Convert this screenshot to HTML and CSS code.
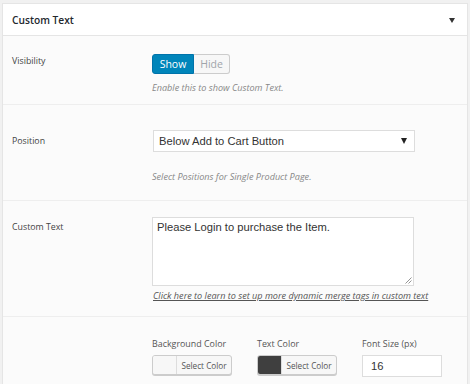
FILE: index.html
```html
<!DOCTYPE html>
<html>
<head>
<meta charset="utf-8">
<link rel="stylesheet" href="styles.css">
</head>
<body>
<div class="panel">
  <div class="header">
    <span class="title">Custom Text</span>
    <span class="caret"></span>
  </div>
  <div class="rows">
    <div class="row row-vis">
      <div class="label">Visibility</div>
      <div class="control">
        <div class="toggle"><span class="tg on">Show</span><span class="tg off">Hide</span></div>
        <p class="help">Enable this to show Custom Text.</p>
      </div>
    </div>
    <div class="row row-pos">
      <div class="label label-pos">Position</div>
      <div class="control">
        <div class="select"><span>Below Add to Cart Button</span><span class="sel-arrow"></span></div>
        <p class="help help-pos">Select Positions for Single Product Page.</p>
      </div>
    </div>
    <div class="row row-text">
      <div class="label label-text">Custom Text</div>
      <div class="control">
        <div class="textarea">Please Login to purchase the Item.<svg class="grip" width="7" height="7" viewBox="0 0 7 7"><path d="M6.5 0.5L0.5 6.5M6.5 3.5L3.5 6.5" stroke="#888" stroke-width="0.9"/></svg></div>
        <a class="link">Click here to learn to set up more dynamic merge tags in custom text</a>
      </div>
    </div>
    <div class="row row-style">
      <div class="label"></div>
      <div class="control fields">
        <div class="field">
          <div class="flabel">Background Color</div>
          <div class="colorbtn"><span class="swatch light"></span><span class="ctext">Select Color</span></div>
        </div>
        <div class="field">
          <div class="flabel">Text Color</div>
          <div class="colorbtn"><span class="swatch dark"></span><span class="ctext">Select Color</span></div>
        </div>
        <div class="field">
          <div class="flabel">Font Size (px)</div>
          <div class="num">16</div>
        </div>
      </div>
    </div>
  </div>
</div>
</body>
</html>
```
FILE: styles.css
```css
html, body {
  margin: 0;
  padding: 0;
  background: #f1f1f1;
  font-family: "Open Sans", sans-serif;
}
.panel {
  margin: 3px 2px 0 2px;
  border: 1px solid #e5e5e5;
  border-bottom: none;
  background: #fbfbfb;
}
.header {
  height: 31px;
  background: #fff;
  border-bottom: 1px solid #e5e5e5;
  display: flex;
  align-items: center;
  justify-content: space-between;
  padding: 0 12px 0 9px;
}
.title {
  font-size: 10.2px;
  font-weight: 600;
  color: #23282d;
}
.caret {
  width: 0;
  height: 0;
  border-left: 3.5px solid transparent;
  border-right: 3.5px solid transparent;
  border-top: 5px solid #333;
  margin-top: 2px;
}
.row {
  display: flex;
  border-bottom: 1px solid #eee;
}
.label {
  width: 140px;
  flex: none;
  padding-left: 9px;
  font-size: 8.8px;
  color: #444;
}
.control {
  flex: 1;
}
.row-vis { padding-top: 15px; height: 53px; }
.row-vis .label { padding-top: 4px; }
.toggle {
  display: inline-flex;
  height: 20px;
  border-radius: 3px;
}
.tg {
  display: flex;
  align-items: center;
  justify-content: center;
  font-size: 10.5px;
  height: 18px;
  box-sizing: content-box;
}
.tg.on {
  width: 40px;
  background: #0085ba;
  color: #fff;
  border: 1px solid #0073aa;
  border-radius: 3px 0 0 3px;
}
.tg.off {
  width: 35px;
  background: #f7f7f7;
  color: #a0a5aa;
  border: 1px solid #ccc;
  border-left: none;
  border-radius: 0 3px 3px 0;
}
.help {
  margin: 7px 0 0;
  font-size: 9.1px;
  font-style: italic;
  color: #888;
}
.row-pos { padding-top: 25px; height: 70px; }
.label-pos { padding-top: 5px; }
.select {
  height: 20px;
  margin-left: 1px;
  background: #fff;
  border: 1px solid #ddd;
  display: flex;
  align-items: center;
  justify-content: space-between;
  padding: 0 7px 0 5px;
  box-sizing: content-box;
  width: 248px;
  font-family: "Liberation Sans", Arial, sans-serif;
  font-size: 11.2px;
  color: #333;
}
.sel-arrow {
  width: 0;
  height: 0;
  border-left: 3.5px solid transparent;
  border-right: 3.5px solid transparent;
  border-top: 6px solid #222;
}
.help-pos { margin-top: 18px; }
.row-text { padding-top: 16px; height: 99px; }
.label-text { padding-top: 4px; }
.textarea {
  position: relative;
  width: 252px;
  height: 61px;
  padding: 3px 4px;
  background: #fff;
  border: 1px solid #ddd;
  font-family: "Liberation Sans", Arial, sans-serif;
  font-size: 11.2px;
  color: #333;
}
.grip {
  position: absolute;
  right: 1px;
  bottom: 1px;
}
.link {
  display: block;
  margin-top: 3px;
  margin-left: 1px;
  font-size: 9.1px;
  font-style: italic;
  text-decoration: underline;
  color: #555;
}
.row-style { padding-top: 20px; height: 60px; border-bottom: none; }
.fields {
  display: flex;
  gap: 25px;
}
.flabel {
  font-size: 8.9px;
  color: #555;
  height: 13px;
  margin-bottom: 5px;
}
.colorbtn {
  display: flex;
  width: 78px;
  height: 18px;
  border: 1px solid #ccc;
  border-radius: 3px;
  background: #f7f7f7;
  box-shadow: 0 1px 0 #ccc;
  overflow: hidden;
}
.swatch {
  width: 23px;
  border-right: 1px solid #ddd;
}
.swatch.light { background: #f7f7f7; }
.swatch.dark { background: #3f3f3f; }
.ctext {
  flex: 1;
  display: flex;
  align-items: center;
  justify-content: center;
  font-size: 8.2px;
  color: #555;
}
.num {
  width: 70px;
  height: 20px;
  padding-left: 8px;
  border: 1px solid #ddd;
  background: #fff;
  display: flex;
  align-items: center;
  font-family: "Liberation Sans", Arial, sans-serif;
  font-size: 11.2px;
  color: #333;
}
```
